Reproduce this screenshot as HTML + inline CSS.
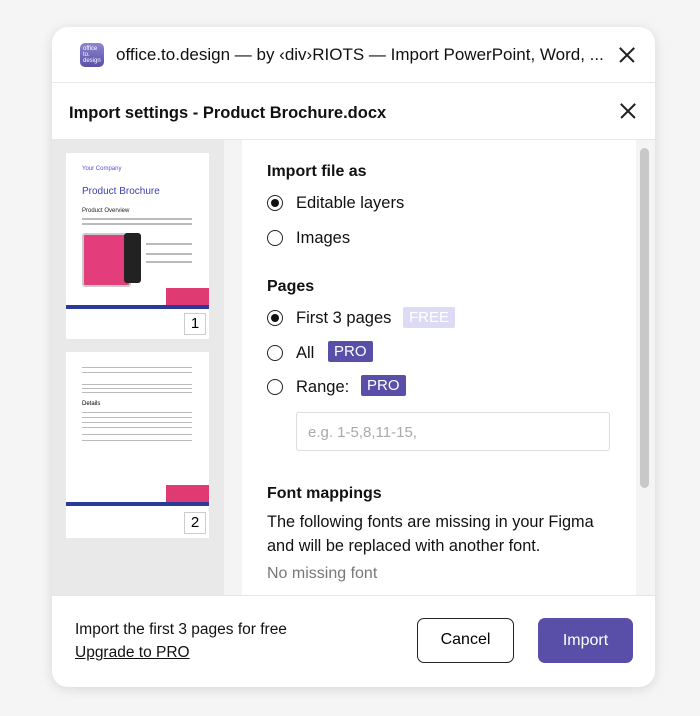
<!DOCTYPE html>
<html><head><style>
body{margin:0;width:700px;height:716px;background:#f5f5f5;font-family:"Liberation Sans",sans-serif;position:relative;overflow:hidden}
.card{position:absolute;left:52px;top:27px;width:603px;height:660px;background:#fff;border-radius:16px;box-shadow:0 2px 12px rgba(0,0,0,.12);overflow:hidden}
.abs{position:absolute}
.t{font-size:16px;color:#111;white-space:nowrap}
.x{position:absolute;width:16px;height:16px}
.x:before,.x:after{content:"";position:absolute;left:-2px;top:7px;width:20px;height:1.6px;background:#222;transform:rotate(45deg)}
.x:after{transform:rotate(-45deg)}
.radio{position:absolute;width:14px;height:14px;border:1.5px solid #222;border-radius:50%}
.radio.on:after{content:"";position:absolute;left:3px;top:3px;width:8px;height:8px;border-radius:50%;background:#111}
.pro{position:absolute;background:#5a4fa8;color:#fff;font-size:15px;padding:2px 6px;border-radius:2px}
.page{position:absolute;left:14px;width:143px;background:#fff}
.ln{position:absolute;height:2px;background:#bbb;left:16px}
</style></head><body>
<div class="card">
 <div class="abs" style="left:28px;top:16px;width:24px;height:24px;border-radius:5px;background:linear-gradient(#8d86d0,#5a4fa8);color:#fff;font-size:6px;line-height:6px;padding:3px;box-sizing:border-box">office<br>to.<br>design</div>
 <div class="abs t" style="left:64px;top:18px;font-size:17px">office.to.design — by ‹div›RIOTS — Import PowerPoint, Word, ...</div>
 <div class="x" style="left:567px;top:20px"></div>
 <div class="abs" style="left:0;top:55px;width:603px;height:1px;background:#e6e6e6"></div>
 <div class="abs t" style="left:17px;top:77px;font-weight:bold;font-size:16.5px">Import settings - Product Brochure.docx</div>
 <div class="x" style="left:568px;top:76px"></div>
 <div class="abs" style="left:0;top:112px;width:603px;height:1px;background:#e6e6e6"></div>
 <div class="abs" style="left:0;top:113px;width:172px;height:455px;background:#e9e9e9">
  <div class="page" style="top:13px;height:186px">
   <div class="abs" style="left:16px;top:13px;font-size:6px;color:#5a4fe0">Your Company</div>
   <div class="abs" style="left:16px;top:33px;font-size:10px;color:#3b3fb0">Product Brochure</div>
   <div class="abs" style="left:16px;top:55px;font-size:6px;color:#222">Product Overview</div>
   <div class="ln" style="top:65px;width:110px"></div><div class="ln" style="top:70px;width:110px"></div>
   <div class="abs" style="left:16px;top:80px;width:45px;height:50px;background:#e33d7b;border:2px solid #ccc;border-radius:3px"></div>
   <div class="abs" style="left:58px;top:80px;width:17px;height:50px;background:#222;border-radius:3px"></div>
   <div class="ln" style="top:90px;left:80px;width:46px"></div><div class="ln" style="top:100px;left:80px;width:46px"></div><div class="ln" style="top:108px;left:80px;width:46px"></div>
   <div class="abs" style="left:100px;top:135px;width:43px;height:17px;background:#e03a72"></div>
   <div class="abs" style="left:0;top:152px;width:143px;height:4px;background:#2a3a9a"></div>
   <div class="abs" style="left:118px;top:160px;width:20px;height:20px;border:1px solid #ccc;font-size:15px;text-align:center;line-height:20px">1</div>
  </div>
  <div class="page" style="top:212px;height:186px">
   <div class="ln" style="top:15px;width:110px;height:1px"></div><div class="ln" style="top:20px;width:110px;height:1px"></div>
   <div class="ln" style="top:32px;width:110px;height:1px"></div><div class="ln" style="top:36px;width:110px;height:1px"></div><div class="ln" style="top:40px;width:110px;height:1px"></div>
   <div class="abs" style="left:16px;top:49px;font-size:6px">Details</div>
   <div class="ln" style="top:60px;width:110px;height:1px"></div><div class="ln" style="top:65px;width:110px;height:1px"></div><div class="ln" style="top:70px;width:110px;height:1px"></div><div class="ln" style="top:75px;width:110px;height:1px"></div><div class="ln" style="top:82px;width:110px;height:1px"></div><div class="ln" style="top:88px;width:110px;height:1px"></div>
   <div class="abs" style="left:100px;top:133px;width:43px;height:17px;background:#e03a72"></div>
   <div class="abs" style="left:0;top:150px;width:143px;height:4px;background:#2a3a9a"></div>
   <div class="abs" style="left:118px;top:160px;width:20px;height:20px;border:1px solid #ccc;font-size:15px;text-align:center;line-height:20px">2</div>
  </div>
 </div>
 <div class="abs" style="left:172px;top:113px;width:18px;height:455px;background:#f4f4f4"></div>
 <div class="abs" style="left:584px;top:113px;width:19px;height:455px;background:#f4f4f4"><div class="abs" style="left:4px;top:8px;width:9px;height:340px;background:#c8c8c8;border-radius:5px"></div></div>
 <div class="abs t" style="left:215px;top:136px;font-weight:bold">Import file as</div>
 <div class="radio on" style="left:215px;top:168px"></div><div class="abs t" style="left:244px;top:167px;font-size:16.5px">Editable layers</div>
 <div class="radio" style="left:215px;top:203px"></div><div class="abs t" style="left:244px;top:202px;font-size:16.5px">Images</div>
 <div class="abs t" style="left:215px;top:251px;font-weight:bold">Pages</div>
 <div class="radio on" style="left:215px;top:283px"></div><div class="abs t" style="left:244px;top:282px;font-size:16.5px">First 3 pages</div>
 <div class="pro" style="left:351px;top:280px;background:#dcdaf5;color:#fff">FREE</div>
 <div class="radio" style="left:215px;top:318px"></div><div class="abs t" style="left:244px;top:317px;font-size:16.5px">All</div>
 <div class="pro" style="left:276px;top:314px">PRO</div>
 <div class="radio" style="left:215px;top:352px"></div><div class="abs t" style="left:244px;top:351px;font-size:16.5px">Range:</div>
 <div class="pro" style="left:309px;top:348px">PRO</div>
 <div class="abs" style="left:244px;top:385px;width:314px;height:39px;border:1px solid #ddd;border-radius:3px;box-sizing:border-box;color:#aaa;font-size:15px;padding:11px 11px">e.g. 1-5,8,11-15,</div>
 <div class="abs t" style="left:215px;top:458px;font-weight:bold">Font mappings</div>
 <div class="abs t" style="left:215px;top:486px;font-size:16.3px">The following fonts are missing in your Figma</div>
 <div class="abs t" style="left:215px;top:510px;font-size:16.3px">and will be replaced with another font.</div>
 <div class="abs t" style="left:215px;top:538px;color:#777">No missing font</div>
 <div class="abs" style="left:0;top:568px;width:603px;height:1px;background:#e6e6e6"></div>
 <div class="abs t" style="left:23px;top:594px;font-size:15.5px">Import the first 3 pages for free</div>
 <div class="abs t" style="left:23px;top:617px;font-size:15.5px;text-decoration:underline">Upgrade to PRO</div>
 <div class="abs" style="left:365px;top:591px;width:97px;height:45px;border:1.5px solid #222;border-radius:7px;box-sizing:border-box;text-align:center;line-height:42px;font-size:16px">Cancel</div>
 <div class="abs" style="left:486px;top:591px;width:95px;height:45px;background:#5a4fa8;border-radius:7px;color:#fff;text-align:center;line-height:45px;font-size:16px">Import</div>
</div>
</body></html>
